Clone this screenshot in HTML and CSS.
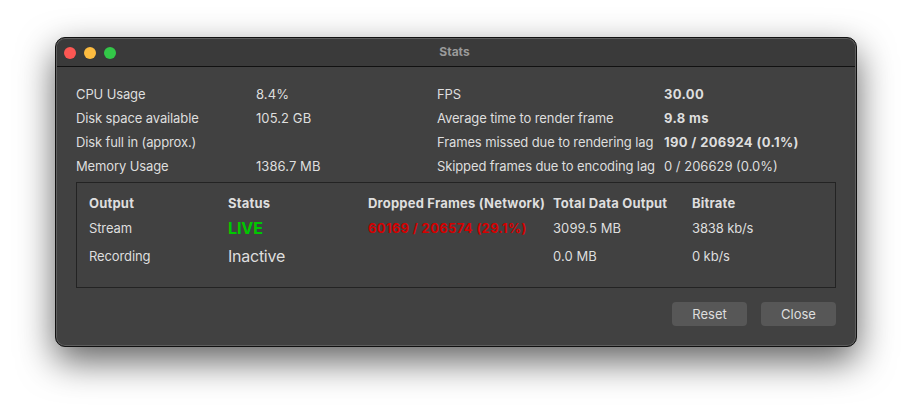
FILE: index.html
```html
<!DOCTYPE html>
<html lang="en">
<head>
    <meta charset="UTF-8">
    <meta name="viewport" content="width=device-width, initial-scale=1.0">
    <title>Stats</title>
    <link rel="stylesheet" href="styles.css">
</head>
<body>
    <div class="window">
        <div class="titlebar">
            <div class="lights">
                <span class="light red"></span>
                <span class="light yellow"></span>
                <span class="light green"></span>
            </div>
            <div class="title">Stats</div>
        </div>
        <div class="content">
            <div class="summary">
                <div class="label">CPU Usage</div>
                <div class="value">8.4%</div>
                <div class="label">FPS</div>
                <div class="bold">30.00</div>

                <div class="label">Disk space available</div>
                <div class="value">105.2 GB</div>
                <div class="label">Average time to render frame</div>
                <div class="bold">9.8 ms</div>

                <div class="label">Disk full in (approx.)</div>
                <div></div>
                <div class="label">Frames missed due to rendering lag</div>
                <div class="bold">190 / 206924 (0.1%)</div>

                <div class="label">Memory Usage</div>
                <div class="value">1386.7 MB</div>
                <div class="label">Skipped frames due to encoding lag</div>
                <div>0 / 206629 (0.0%)</div>
            </div>

            <div class="outputs">
                <div class="head">Output</div>
                <div class="head">Status</div>
                <div class="head">Dropped Frames (Network)</div>
                <div class="head">Total Data Output</div>
                <div class="head">Bitrate</div>

                <div class="label">Stream</div>
                <div class="live">LIVE</div>
                <div class="dropped">60169 / 206574 (29.1%)</div>
                <div class="value">3099.5 MB</div>
                <div class="label">3838 kb/s</div>

                <div class="label">Recording</div>
                <div class="inactive">Inactive</div>
                <div></div>
                <div class="value">0.0 MB</div>
                <div class="label">0 kb/s</div>
            </div>

            <div class="buttons">
                <button class="btn">Reset</button>
                <button class="btn">Close</button>
            </div>
        </div>
    </div>
</body>
</html>
```

FILE: styles.css
```css
body {
    font-family: 'Inter', 'Roboto', sans-serif;
    font-size: 13px;
    margin: 0;
    padding: 37px 55px;
    height: 420px;
    box-sizing: border-box;
    overflow: hidden;
    background: white;
    color: #dedede;
}
.window {
    width: 802px;
    height: 310px;
    box-sizing: border-box;
    background: #414141;
    border: 1px solid #111;
    border-radius: 10px;
    box-shadow: inset 0 0 0 1px #5e5e5e, 0 14px 36px rgba(0,0,0,0.62);
    overflow: hidden;
}
.titlebar {
    height: 27px;
    display: flex;
    align-items: center;
    background: #3a3a3a;
    border-bottom: 1px solid #111;
    margin: 1px 1px 0;
    border-radius: 9px 9px 0 0;
}
.lights {
    display: flex;
    gap: 8px;
    padding-left: 7px;
}
.light {
    width: 12px;
    height: 12px;
    border-radius: 50%;
}
.red {
    background: #fc5753;
}
.yellow {
    background: #fdbc40;
}
.green {
    background: #33c748;
}
.title {
    flex: 1;
    text-align: center;
    font-size: 12px;
    font-weight: 700;
    color: #9a9a9a;
    padding-right: 62px;
    padding-bottom: 2px;
}
.content {
    padding: 15px 20px 0;
}
.summary {
    display: grid;
    grid-template-columns: 180px 181px 227px 1fr;
    grid-auto-rows: 24px;
    align-items: center;
    margin-bottom: 4px;
}
.label {
    letter-spacing: -0.12px;
}
.value {
    letter-spacing: 0.08px;
}
.bold {
    font-weight: 700;
    letter-spacing: 0.36px;
}
.outputs {
    height: 106px;
    box-sizing: border-box;
    display: grid;
    grid-template-columns: 139px 140px 185px 139px 1fr;
    grid-template-rows: 27px 24px 32px;
    align-items: center;
    align-content: start;
    padding: 6px 12px 0;
    border: 1px solid #232323;
}
.head {
    font-weight: 700;
    letter-spacing: 0.2px;
}
.live {
    color: #00c800;
    font-size: 16px;
    font-weight: 700;
    letter-spacing: -0.1px;
}
.dropped {
    color: #d40000;
    font-weight: 700;
    letter-spacing: 0.34px;
}
.inactive {
    font-size: 16px;
    letter-spacing: -0.25px;
}
.buttons {
    display: flex;
    justify-content: flex-end;
    gap: 14px;
    margin-top: 14px;
}
.btn {
    width: 75px;
    height: 24px;
    padding: 0;
    border: none;
    border-radius: 4px;
    background: #575757;
    color: #dedede;
    font-family: inherit;
    font-size: 13px;
}
```
